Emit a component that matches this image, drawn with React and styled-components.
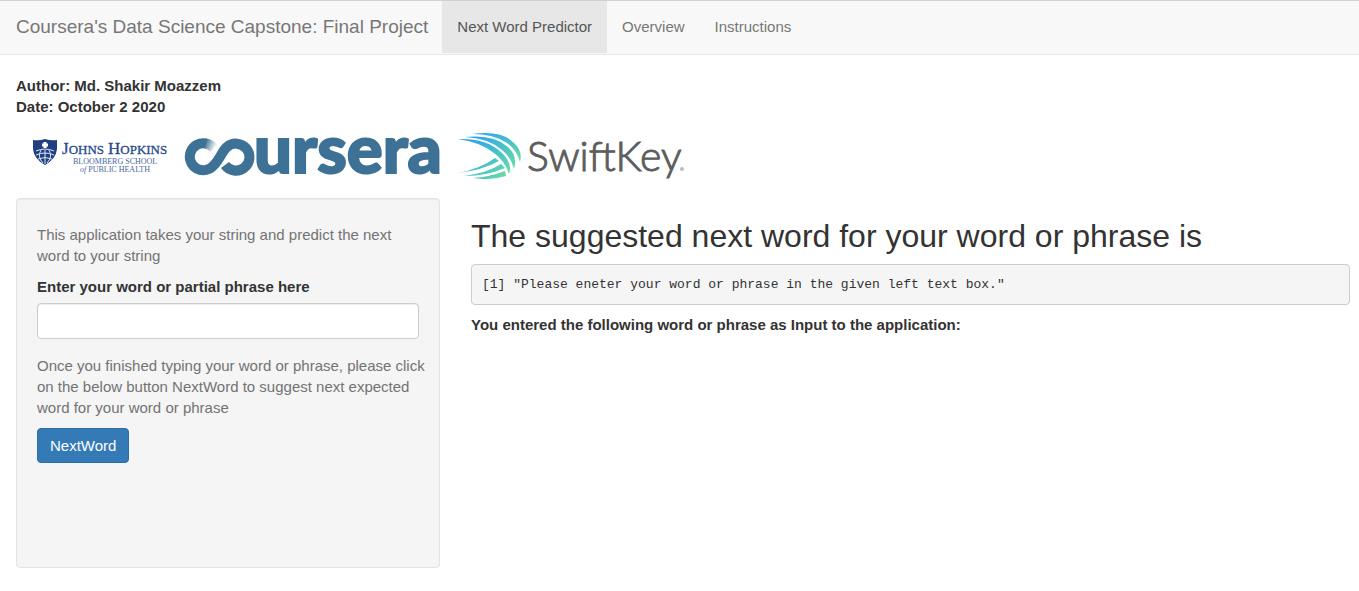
import React from "react";
import styled, { createGlobalStyle } from "styled-components";

const GlobalStyle = createGlobalStyle`
  *, *::before, *::after { box-sizing: border-box; }
  body {
    margin: 0;
    background: #fff;
    color: #333;
    font: 15px/21px "Liberation Sans", Arial, sans-serif;
  }
`;

const Navbar = styled.nav`
  display: flex;
  align-items: flex-start;
  height: 55px;
  background: #f8f8f8;
  border-top: 1px solid #d0d0d0;
  border-bottom: 1px solid #e7e7e7;
`;

const Brand = styled.a`
  padding: 16px 14px 16px 16px;
  color: #777;
  font-size: 19px;
  line-height: 20px;
  text-decoration: none;
  white-space: nowrap;
`;

const NavLink = styled.a`
  padding: 16px 15px;
  color: ${(p) => (p.$active ? "#555" : "#777")};
  background: ${(p) => (p.$active ? "#e7e7e7" : "transparent")};
  line-height: 20px;
  text-decoration: none;
  white-space: nowrap;
`;

const Page = styled.div`
  padding: 20px 9px 20px 16px;
`;

const Byline = styled.header`
  font-weight: bold;
`;

const Logos = styled.div`
  display: flex;
  align-items: center;
  gap: 16px;
  height: 76px;
  margin-bottom: 5px;

  svg {
    display: block;
    flex: none;
    overflow: visible;
  }
`;

const Columns = styled.div`
  display: grid;
  grid-template-columns: minmax(0, 424fr) minmax(0, 879fr);
  gap: 31px;
  align-items: start;
`;

const Sidebar = styled.form`
  min-height: 370px;
  padding: 20px;
  background: #f5f5f5;
  border: 1px solid #e3e3e3;
  border-radius: 4px;
  box-shadow: inset 0 1px 1px rgba(0, 0, 0, 0.05);
`;

const HelpText = styled.p`
  margin: 5px 0 10px;
  color: #737373;
  white-space: nowrap;
`;

const Label = styled.label`
  display: block;
  margin-bottom: 6px;
  font-weight: bold;
`;

const TextInput = styled.input`
  display: block;
  width: 100%;
  height: 36px;
  margin-bottom: 16px;
  padding: 6px 12px;
  font: inherit;
  color: #555;
  background: #fff;
  border: 1px solid #ccc;
  border-radius: 4px;
  box-shadow: inset 0 1px 1px rgba(0, 0, 0, 0.075);
`;

const PrimaryButton = styled.button`
  height: 35px;
  padding: 0 12px;
  font: inherit;
  color: #fff;
  background: #337ab7;
  border: 1px solid #2e6da4;
  border-radius: 4px;
  cursor: pointer;
`;

const Main = styled.main`
  padding-top: 20px;
`;

const Heading = styled.h2`
  margin: 0 0 10px;
  font-size: 32px;
  line-height: 36px;
  font-weight: normal;
`;

const Output = styled.pre`
  margin: 0 0 9px;
  padding: 10px;
  font: 13px/19px Consolas, "Liberation Mono", monospace;
  background: #f5f5f5;
  border: 1px solid #ccc;
  border-radius: 4px;
  white-space: pre-wrap;
`;

const Caption = styled.strong`
  display: block;
`;

function HopkinsLogo() {
  return (
    <svg width="152" height="60" viewBox="16 125 152 60" role="img" aria-label="Johns Hopkins Bloomberg School of Public Health">
      <path d="M33 140Q39 141 45 139Q51 141 57 140V149Q56 159 45 165Q34 159 33 149Z" fill="#1f3f82" />
      <path d="M45 142v6M42 145h6" stroke="#fff" strokeWidth="3" />
      <g fill="none" stroke="#dce5f3" strokeWidth="1">
        <path d="M36 151Q45 147 54 151M36 155Q45 151 54 155M38 159Q45 156 52 159M45 150V164M41 150Q37 157 43 163M49 150Q53 157 47 163" />
      </g>
      <g fill="#284a8c" stroke="#284a8c" strokeWidth="0.3" fontFamily="Liberation Serif, serif">
        <text x="62" y="154" fontSize="17">J<tspan fontSize="13">OHNS</tspan></text>
        <text x="108" y="154" fontSize="17">H<tspan fontSize="13">OPKINS</tspan></text>
      </g>
      <g fill="#4a67a0" fontFamily="Liberation Serif, serif" fontSize="8">
        <text x="73" y="164">BLOOMBERG SCHOOL</text>
        <text x="80" y="172"><tspan fontStyle="italic">of</tspan> PUBLIC HEALTH</text>
      </g>
    </svg>
  );
}

function CourseraLogo() {
  return (
    <svg width="257" height="60" viewBox="184 125 257 60" role="img" aria-label="Coursera">
      <defs>
        <linearGradient id="ribbon" gradientUnits="userSpaceOnUse" x1="205" y1="142" x2="215" y2="146">
          <stop offset="0" stopColor="#3d7195" />
          <stop offset="1" stopColor="#3d7195" stopOpacity="0.1" />
        </linearGradient>
      </defs>
      <g fill="none" stroke="#3d7195" strokeWidth="10">
        <path d="M206 143.500A13.500 13.500 0 1 0 214 165C220 159 222 151 227 147A13.500 13.500 0 1 1 225 165" />
        <path d="M205 143.500Q210 144 214 148" stroke="url(#ribbon)" />
      </g>
      <text x="254" y="173" fill="#3d7195" stroke="#3d7195" strokeWidth="2" fontFamily="Lato, sans-serif" fontWeight="900" fontSize="67">ursera</text>
    </svg>
  );
}

function SwiftKeyLogo() {
  return (
    <svg width="228" height="60" viewBox="457 125 228 60" role="img" aria-label="SwiftKey">
      <defs>
        <linearGradient id="swift" gradientUnits="userSpaceOnUse" x1="470" y1="132" x2="512" y2="176">
          <stop offset="0" stopColor="#299cf6" />
          <stop offset="0.500" stopColor="#45bdd0" />
          <stop offset="1" stopColor="#6be29a" />
        </linearGradient>
      </defs>
      <g fill="url(#swift)">
        <path d="M472 134Q502 130 514 143Q523 151 520 162Q517 150 507 143Q494 134 472 134Z" />
        <path d="M465 137Q494 134 508 147Q518 156 514 169Q511 157 502 150Q488 138 465 137Z" />
        <path d="M458 139Q486 138 501 152Q513 163 509 174Q505 161 494 153Q480 142 458 139Z" />
        <path d="M458 173Q480 169 495 158L499 161Q483 170 458 173Z" />
        <path d="M464 176Q487 173 501 164L505 168Q487 176 464 176Z" />
        <path d="M473 178Q489 177 505 171L506 176Q490 181 473 178Z" />
      </g>
      <text x="527" y="171" fill="#5d5d5d" stroke="#5d5d5d" strokeWidth="1" fontFamily="Lato, sans-serif" fontWeight="300" fontSize="41">SwiftKey</text>
      <circle cx="682" cy="169" r="2" fill="#bbb" />
    </svg>
  );
}

export default function App() {
  return (
    <>
      <GlobalStyle />
      <Navbar>
        <Brand href="#">Coursera's Data Science Capstone: Final Project</Brand>
        <NavLink href="#predictor" $active>Next Word Predictor</NavLink>
        <NavLink href="#overview">Overview</NavLink>
        <NavLink href="#instructions">Instructions</NavLink>
      </Navbar>
      <Page>
        <Byline>
          <div>Author: Md. Shakir Moazzem</div>
          <div>Date: October 2 2020</div>
        </Byline>
        <Logos>
          <HopkinsLogo />
          <CourseraLogo />
          <SwiftKeyLogo />
        </Logos>
        <Columns>
          <Sidebar onSubmit={(e) => e.preventDefault()}>
            <HelpText>
              This application takes your string and predict the next
              <br />
              word to your string
            </HelpText>
            <Label htmlFor="phrase">Enter your word or partial phrase here</Label>
            <TextInput id="phrase" type="text" />
            <HelpText>
              Once you finished typing your word or phrase, please click
              <br />
              on the below button NextWord to suggest next expected
              <br />
              word for your word or phrase
            </HelpText>
            <PrimaryButton type="submit">NextWord</PrimaryButton>
          </Sidebar>
          <Main>
            <Heading>The suggested next word for your word or phrase is</Heading>
            <Output>[1] "Please eneter your word or phrase in the given left text box."</Output>
            <Caption>You entered the following word or phrase as Input to the application:</Caption>
          </Main>
        </Columns>
      </Page>
    </>
  );
}
